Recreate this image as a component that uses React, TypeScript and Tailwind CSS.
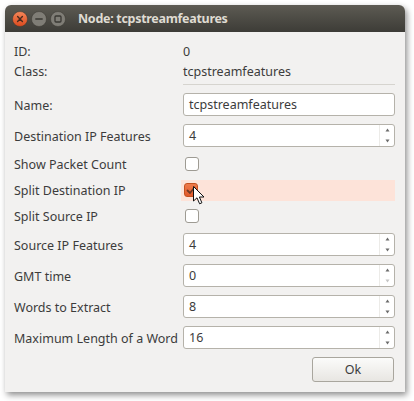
import React from 'react';

const labelCls = 'pt-[3px] text-[12.5px] text-[#3c3c3c] leading-none whitespace-nowrap';

function TitleButtons() {
  return (
    <div className="flex items-center gap-[3px] pl-[7px]">
      <svg width="16" height="16" viewBox="0 0 16 16">
        <defs>
          <linearGradient id="cl" x1="0" y1="0" x2="0" y2="1">
            <stop offset="0" stopColor="#f4875a" />
            <stop offset="1" stopColor="#dc4a1e" />
          </linearGradient>
        </defs>
        <circle cx="8" cy="8" r="7.5" fill="url(#cl)" stroke="#3a3833" strokeWidth="0.5" />
        <path d="M5.6 5.6 L10.4 10.4 M10.4 5.6 L5.6 10.4" stroke="#4a2a1e" strokeWidth="1.4" strokeLinecap="round" />
      </svg>
      <svg width="16" height="16" viewBox="0 0 16 16">
        <circle cx="8" cy="8" r="7.5" fill="#7f7d76" stroke="#3a3833" strokeWidth="0.5" />
        <path d="M4.8 8 H11.2" stroke="#3a3833" strokeWidth="1.4" strokeLinecap="round" />
      </svg>
      <svg width="16" height="16" viewBox="0 0 16 16">
        <circle cx="8" cy="8" r="7.5" fill="#7f7d76" stroke="#3a3833" strokeWidth="0.5" />
        <rect x="5" y="5" width="6" height="6" rx="1" fill="none" stroke="#3a3833" strokeWidth="1.3" />
      </svg>
    </div>
  );
}

function Spin({ value, downDisabled }: { value: string; downDisabled?: boolean }) {
  return (
    <div className="flex h-[23px] w-[212px] rounded-[3px] border border-[#b5b2aa] bg-white">
      <div className="flex flex-1 items-center pl-[5px] pt-[2px] text-[12.5px] text-[#3c3c3c]">{value}</div>
      <div className="flex w-[15px] flex-col items-center justify-between border-l border-[#ecebe8] py-[3px]">
        <svg width="5" height="4" viewBox="0 0 5 4">
          <path d="M2.5 0.5 L4.5 3.5 H0.5 Z" fill="#6a6a6a" />
        </svg>
        <svg width="5" height="4" viewBox="0 0 5 4">
          <path d="M0.5 0.5 H4.5 L2.5 3.5 Z" fill={downDisabled ? '#c4c4c4' : '#6a6a6a'} />
        </svg>
      </div>
    </div>
  );
}

function Box() {
  return <div className="ml-[2px] h-[14px] w-[14px] rounded-[3px] border border-[#9e9b93] bg-white" />;
}

function Row({ label, h, children }: { label: string; h: string; children: React.ReactNode }) {
  return (
    <div className={`flex items-center ${h}`}>
      <div className={`w-[169px] ${labelCls}`}>{label}</div>
      <div className="flex flex-1 items-center">{children}</div>
    </div>
  );
}

export default function App() {
  return (
    <div className="h-[401px] w-[414px] bg-white pl-[5px] pt-[5px]" style={{ fontFamily: '"Noto Sans", "Open Sans", sans-serif' }}>
      <div className="w-[400px] overflow-hidden rounded-t-[6px] shadow-[2px_3px_6px_rgba(0,0,0,0.45)]">
        <div className="flex h-[27px] items-center bg-gradient-to-b from-[#5d5b53] to-[#3d3c37]">
          <TitleButtons />
          <div className="ml-[12px] pt-[1px] text-[12.5px] font-bold tracking-[-0.3px] text-[#dfdbd2]">Node: tcpstreamfeatures</div>
        </div>
        <div className="flex flex-col bg-[#f2f1f0] pb-[10px] pl-[9px] pr-[10px] pt-[9px]">
          <Row label="ID:" h="h-[20px]">
            <span className={labelCls}>0</span>
          </Row>
          <Row label="Class:" h="h-[20px]">
            <span className={labelCls}>tcpstreamfeatures</span>
          </Row>
          <div className="ml-[169px] mt-[3px] h-px bg-[#d6d4cf]" />
          <div className="mt-[8px] flex flex-col gap-[8px]">
            <Row label="Name:" h="h-[23px]">
              <div className="flex h-[23px] w-[212px] items-center rounded-[3px] border border-[#b5b2aa] bg-white pl-[5px] pt-[2px] text-[12.5px] text-[#3c3c3c]">
                tcpstreamfeatures
              </div>
            </Row>
            <Row label="Destination IP Features" h="h-[23px]">
              <Spin value="4" />
            </Row>
            <Row label="Show Packet Count" h="h-[18px]">
              <Box />
            </Row>
            <Row label="Split Destination IP" h="h-[18px]">
              <div className="relative flex h-[21px] w-[214px] items-center bg-[#fde3d9]">
                <div className="ml-[3px] flex h-[14px] w-[14px] items-center justify-center rounded-[3px] border border-[#c4501f] bg-gradient-to-b from-[#ef7b4b] to-[#e0582a]">
                  <svg width="10" height="9" viewBox="0 0 10 9">
                    <path d="M1.5 4.5 L4 7 L8.5 1.5" fill="none" stroke="#6e3a26" strokeWidth="1.8" strokeLinecap="round" />
                  </svg>
                </div>
                <svg className="absolute left-[12px] top-[6px]" width="12" height="19" viewBox="0 0 12 19">
                  <path d="M0.5 0.5 V15 L4 11.8 L6.6 17.8 L8.9 16.8 L6.4 11 H11 Z" fill="#ffffff" stroke="#111111" strokeWidth="1" strokeLinejoin="round" />
                </svg>
              </div>
            </Row>
            <Row label="Split Source IP" h="h-[18px]">
              <Box />
            </Row>
            <Row label="Source IP Features" h="h-[23px]">
              <Spin value="4" />
            </Row>
            <Row label="GMT time" h="h-[23px]">
              <Spin value="0" downDisabled />
            </Row>
            <Row label="Words to Extract" h="h-[23px]">
              <Spin value="8" />
            </Row>
            <Row label="Maximum Length of a Word" h="h-[23px]">
              <Spin value="16" />
            </Row>
            <div className="flex justify-end pr-[1px]">
              <button className="h-[25px] w-[82px] rounded-[3px] border border-[#a9a69e] bg-gradient-to-b from-[#fbfbfa] to-[#e8e6e2] pt-[1px] text-[12.5px] text-[#3c3c3c]">
                Ok
              </button>
            </div>
          </div>
        </div>
      </div>
    </div>
  );
}
